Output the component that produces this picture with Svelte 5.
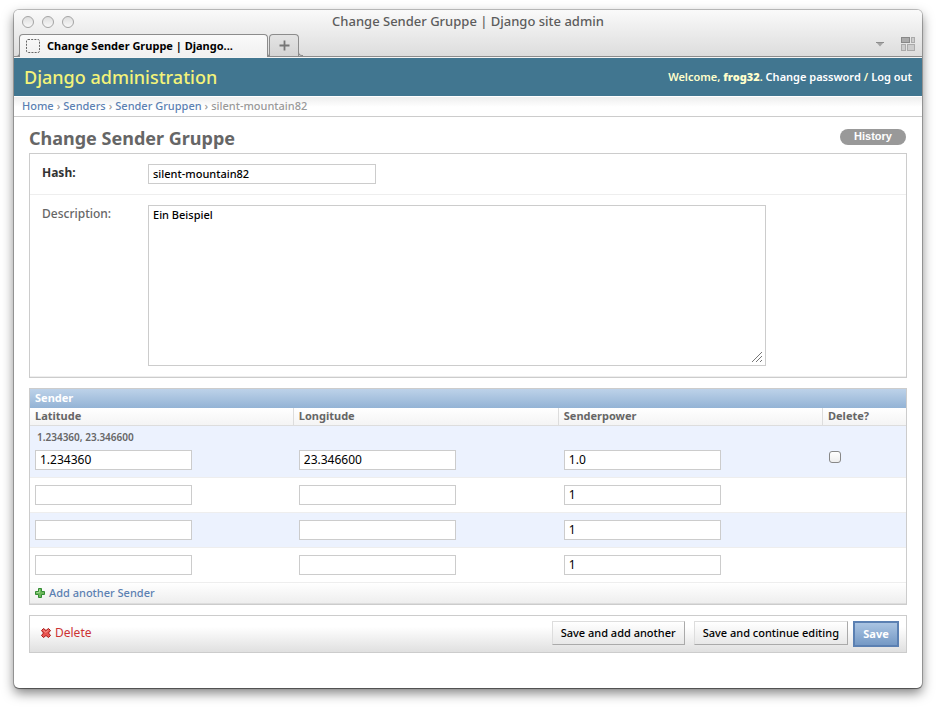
<script>
  const fields = ['Latitude', 'Longitude', 'Senderpower'];
  let hash = $state('silent-mountain82');
  let description = $state('Ein Beispiel');
  let marked = $state(false);
  let rows = $state([
    { original: '1.234360, 23.346600', values: ['1.234360', '23.346600', '1.0'] },
    { original: '', values: ['', '', '1'] },
    { original: '', values: ['', '', '1'] },
    { original: '', values: ['', '', '1'] }
  ]);

  function addRow(event) {
    event.preventDefault();
    rows.push({ original: '', values: ['', '', '1'] });
  }
</script>

<div class="desktop">
  <div class="window">
    <div class="chrome">
      <div class="titlebar">
        <div class="lights">
          <button aria-label="Close window"></button>
          <button aria-label="Minimize window"></button>
          <button aria-label="Zoom window"></button>
        </div>
        <div class="window-title">Change Sender Gruppe | Django site admin</div>
      </div>
      <div class="tabs">
        <div class="tab active">
          <svg width="14" height="14" viewBox="0 0 14 14" aria-hidden="true">
            <rect x="0.5" y="0.5" width="13" height="13" rx="1.5" fill="none" stroke="#666" stroke-dasharray="2 1.2" />
          </svg>
          <span>Change Sender Gruppe | Django...</span>
        </div>
        <button class="tab add" aria-label="New tab">
          <svg width="11" height="11" viewBox="0 0 11 11" aria-hidden="true">
            <path d="M5.5 0.5V10.5M0.5 5.5H10.5" stroke="#777" stroke-width="1.8" />
          </svg>
        </button>
        <div class="tools">
          <button aria-label="List all tabs">
            <svg width="8" height="5" viewBox="0 0 8 5" aria-hidden="true"><path d="M0 0H8L4 4.5Z" fill="#a5a5a5" /><path d="M0 .5H8" stroke="#8d8d8d" /></svg>
          </button>
          <button aria-label="Tab groups">
            <svg width="14" height="14" viewBox="0 0 14 14" aria-hidden="true">
              <rect x="0.5" y="0.5" width="8" height="5" fill="#aaa" stroke="#888" />
              <rect x="10.5" y="0.5" width="3" height="5" fill="#ccc" stroke="#aaa" />
              <rect x="0.5" y="7.5" width="4" height="6" fill="#ccc" stroke="#aaa" />
              <rect x="6.5" y="7.5" width="7" height="6" fill="#ccc" stroke="#aaa" />
            </svg>
          </button>
        </div>
      </div>
    </div>

    <header>
      <div class="site-name">Django administration</div>
      <div class="user-tools">
        Welcome, <strong>frog32</strong>. <a href="#password">Change password</a><span>/</span><a href="#logout">Log out</a>
      </div>
    </header>

    <nav aria-label="Breadcrumbs">
      <a href="#home">Home</a><span>›</span><a href="#senders">Senders</a><span>›</span><a href="#gruppen">Sender Gruppen</a><span>›</span>silent-mountain82
    </nav>

    <main>
      <div class="heading">
        <h1>Change Sender Gruppe</h1>
        <a class="history" href="#history">History</a>
      </div>

      <form onsubmit={(event) => event.preventDefault()}>
        <div class="module">
          <div class="form-row">
            <label class="required" for="hash">Hash:</label>
            <input id="hash" type="text" bind:value={hash} />
          </div>
          <div class="form-row">
            <label for="description">Description:</label>
            <textarea id="description" bind:value={description}></textarea>
          </div>
        </div>

        <div class="module inline-group">
          <h2>Sender</h2>
          <table>
            <thead>
              <tr>
                {#each fields as field}
                  <th scope="col">{field}</th>
                {/each}
                <th scope="col" class="delete-col">Delete?</th>
              </tr>
            </thead>
            <tbody>
              {#each rows as row, r}
                <tr class:saved={row.original}>
                  {#each fields as field, f}
                    <td>
                      {#if row.original}
                        <p>{#if f === 0}{row.original}{/if}</p>
                      {/if}
                      <input type="text" aria-label="{field} {r + 1}" bind:value={row.values[f]} />
                    </td>
                  {/each}
                  <td class="delete-cell">
                    {#if row.original}
                      <input type="checkbox" aria-label="Delete {row.original}" bind:checked={marked} />
                    {/if}
                  </td>
                </tr>
              {/each}
            </tbody>
          </table>
          <div class="add-row">
            <a href="#add" onclick={addRow}>
              <svg width="10" height="10" viewBox="0 0 10 10" aria-hidden="true">
                <path d="M3.5 .5H6.5V3.5H9.5V6.5H6.5V9.5H3.5V6.5H.5V3.5H3.5Z" fill="#6cb85a" stroke="#348c34" />
                <path d="M4.5 1.5V4.5H1.5" fill="none" stroke="#9fd690" />
              </svg>
              Add another Sender
            </a>
          </div>
        </div>

        <div class="submit-row">
          <a class="delete-link" href="#delete">
            <svg width="10" height="10" viewBox="0 0 10 10" aria-hidden="true">
              <path d="M2.5 .5L5 2.5L7.5 .5L9.5 2.5L7.5 5L9.5 7.5L7.5 9.5L5 7.5L2.5 9.5L.5 7.5L2.5 5L.5 2.5Z" fill="#e8534e" stroke="#a81818" />
              <path d="M2.3 2.2L4.7 4.4L7.5 2.2" fill="none" stroke="#f79a90" />
            </svg>
            Delete
          </a>
          <button type="submit">Save and add another</button>
          <button type="submit">Save and continue editing</button>
          <button type="submit" class="default">Save</button>
        </div>
      </form>
    </main>
  </div>
</div>

<style>
  :global(body) {
    margin: 0;
    background: #fff;
  }

  .desktop {
    padding: 10px 14px 20px;
    font: 12px/16px "Lucida Grande", "Noto Sans", "DejaVu Sans", sans-serif;
    color: #333;
    overflow: hidden;
  }

  .desktop *,
  .desktop *::before,
  .desktop *::after {
    box-sizing: border-box;
  }

  button,
  input,
  textarea {
    font: inherit;
    color: #000;
    margin: 0;
  }

  a {
    color: #5b80b2;
    text-decoration: none;
  }

  .window {
    border-radius: 5px;
    background: #fff;
    box-shadow: 0 0 0 1px rgba(0, 0, 0, 0.22), 0 1px 1px rgba(0, 0, 0, 0.35), 0 5px 12px rgba(0, 0, 0, 0.5);
  }

  .chrome {
    border-radius: 5px 5px 0 0;
    background: linear-gradient(#fafafa, #dcdcdc);
    border-bottom: 1px solid #f4f4f4;
  }

  .titlebar {
    display: grid;
    grid-template-columns: 1fr auto 1fr;
    align-items: center;
    height: 24px;
    padding: 0 8px;
  }

  .lights {
    display: flex;
    gap: 8px;
  }

  .lights button {
    width: 12px;
    height: 12px;
    padding: 0;
    border: 1px solid #a4a4a4;
    border-radius: 50%;
    background: linear-gradient(#dedede, #f8f8f8);
  }

  .window-title {
    padding-bottom: 2px;
    font-size: 13px;
    font-weight: 500;
    color: #5c5c5c;
  }

  .tabs {
    display: flex;
    align-items: flex-end;
    height: 23px;
    padding-left: 5px;
    border-bottom: 1px solid #8c8c8c;
  }

  .tab {
    position: relative;
    display: flex;
    align-items: center;
    height: 23px;
    border: 1px solid #8c8c8c;
    border-bottom: 0;
    border-radius: 4px 4px 0 0;
  }

  .tab::before,
  .tab::after {
    content: "";
    position: absolute;
    bottom: 0;
    width: 5px;
    height: 5px;
    border-bottom: 1px solid #8c8c8c;
  }

  .tab::before {
    left: -5px;
    border-right: 1px solid #8c8c8c;
    border-bottom-right-radius: 4px;
  }

  .tab::after {
    right: -5px;
    border-left: 1px solid #8c8c8c;
    border-bottom-left-radius: 4px;
  }

  .active {
    width: 249px;
    margin-bottom: -1px;
    gap: 7px;
    padding: 0 6px;
    background: linear-gradient(#fafafa, #f0f0f0);
    font-size: 11px;
    font-weight: bold;
    color: #000;
    white-space: nowrap;
  }

  .add {
    width: 30px;
    height: 22px;
    margin-left: 1px;
    padding: 0;
    justify-content: center;
    background: linear-gradient(#e4e4e4, #d4d4d4);
  }

  .add::before {
    display: none;
  }

  .tools {
    display: flex;
    align-items: center;
    gap: 17px;
    height: 23px;
    margin-left: auto;
    padding: 0 7px 1px;
  }

  .tools button {
    display: flex;
    padding: 0;
    border: 0;
    background: none;
  }

  header {
    display: flex;
    align-items: center;
    justify-content: space-between;
    height: 38px;
    padding: 0 10px;
    background: #417690;
    color: #ffc;
  }

  .site-name {
    font-size: 18px;
    font-weight: 500;
    line-height: 24px;
    color: #f4f379;
  }

  .user-tools {
    font-size: 11px;
    font-weight: 600;
  }

  .user-tools a {
    color: #fff;
  }

  .user-tools span,
  nav span {
    margin: 0 3px;
  }

  nav {
    height: 21px;
    padding: 1px 8px;
    border-top: 1px solid #fff;
    border-bottom: 1px solid #ccc;
    background: linear-gradient(#eee, #fff 10px);
    font-size: 11px;
    font-weight: 500;
    color: #999;
  }

  main {
    padding: 11px 15px 35px;
  }

  .heading {
    display: flex;
    justify-content: space-between;
    align-items: flex-start;
    height: 25px;
  }

  h1 {
    margin: 0;
    font-size: 18px;
    line-height: 20px;
    color: #666;
  }

  .history {
    width: 66px;
    height: 16px;
    margin: 1px 1px 0 0;
    border-radius: 8px;
    background: #999;
    font: bold 11px/15px "Liberation Sans", sans-serif;
    color: #fff;
    text-align: center;
  }

  .module {
    margin-bottom: 10px;
    border: 1px solid #ccc;
  }

  .form-row {
    display: flex;
    align-items: flex-start;
    padding: 10px 12px;
    border-bottom: 1px solid #eee;
  }

  .form-row label {
    width: 106px;
    line-height: 18px;
    font-weight: 500;
    color: #666;
  }

  .form-row .required {
    font-weight: bold;
    color: #333;
  }

  input[type="text"],
  textarea {
    border: 1px solid #ccc;
    border-radius: 0;
    background: #fff;
    font-size: 11px;
    font-weight: 500;
    outline: 0;
  }

  input[type="text"] {
    display: block;
    width: 157px;
    height: 20px;
    padding: 0 4px 1px;
  }

  td input[type="text"] {
    font-size: 12px;
    font-weight: 400;
  }

  .form-row input[type="text"] {
    width: 228px;
  }

  textarea {
    width: 618px;
    height: 161px;
    padding: 1px 4px;
  }

  textarea::-webkit-resizer {
    background: url("data:image/svg+xml,%3Csvg xmlns='http://www.w3.org/2000/svg' width='15' height='15'%3E%3Cpath d='M2 12L12 2M6 12L12 6M10 12L12 10' stroke='%23777' fill='none'/%3E%3C/svg%3E") no-repeat right bottom;
  }

  h2 {
    margin: 0;
    height: 19px;
    padding: 0 5px;
    background: linear-gradient(#bdd2e9, #93b3d5);
    font-size: 11px;
    line-height: 18px;
    color: #fff;
  }

  table {
    width: 100%;
    border-collapse: separate;
    border-spacing: 0;
    table-layout: fixed;
  }

  th {
    height: 18px;
    padding: 0 5px 1px;
    border-bottom: 1px solid #ddd;
    border-left: 1px solid #ddd;
    background: linear-gradient(#fff, #f4f4f4);
    font-size: 11px;
    line-height: 16px;
    text-align: left;
    vertical-align: top;
    color: #666;
  }

  th:first-child {
    width: 30%;
    border-left: 0;
  }

  th:nth-child(2) {
    width: 265px;
  }

  .delete-col {
    width: 84px;
  }

  td {
    height: 35px;
    padding: 7px 5px;
    border-bottom: 1px solid #eee;
    vertical-align: top;
  }

  td:nth-child(n + 2) {
    padding-left: 6px;
  }

  tbody tr:nth-child(odd) {
    background: #ecf2fe;
  }

  .saved td {
    padding-top: 4px;
  }

  td p {
    height: 16px;
    margin: 0 0 4px;
    padding-left: 2px;
    font-size: 10px;
    font-weight: 600;
    line-height: 15px;
    color: #666;
  }

  .saved .delete-cell {
    padding: 25px 7px 0;
  }

  input[type="checkbox"] {
    display: block;
    appearance: none;
    width: 12px;
    height: 12px;
    border: 1px solid #888;
    border-radius: 3px;
    background: linear-gradient(#fff, #eee);
  }

  input[type="checkbox"]:checked {
    background: #5b80b2;
  }

  .add-row {
    height: 21px;
    padding: 2px 5px;
    border-bottom: 1px solid #ddd;
    background: linear-gradient(#fff, #eee);
    font-size: 11px;
    font-weight: 500;
  }

  .add-row a,
  .delete-link {
    display: inline-flex;
    align-items: center;
    gap: 4px;
  }

  .submit-row {
    display: flex;
    align-items: flex-start;
    height: 38px;
    padding: 5px 7px;
    border: 1px solid #ccc;
    background: linear-gradient(#fff 30%, #e0e0e0);
  }

  .delete-link {
    height: 24px;
    margin-right: auto;
    padding-left: 4px;
    color: #c33;
  }

  .submit-row button {
    height: 24px;
    margin-right: 9px;
    padding: 0 8px;
    border: 1px solid;
    border-color: #ddd #aaa #aaa #ddd;
    background: linear-gradient(#fff, #e8e8e8);
    font-size: 11px;
    font-weight: 500;
    white-space: nowrap;
  }

  .submit-row button:nth-of-type(2) {
    margin-right: 5px;
  }

  .submit-row .default {
    min-width: 46px;
    height: 26px;
    margin-right: 0;
    border: 2px solid #5b80b2;
    background: linear-gradient(#aac4e2, #7599c5);
    font-weight: bold;
    color: #fff;
  }
</style>
